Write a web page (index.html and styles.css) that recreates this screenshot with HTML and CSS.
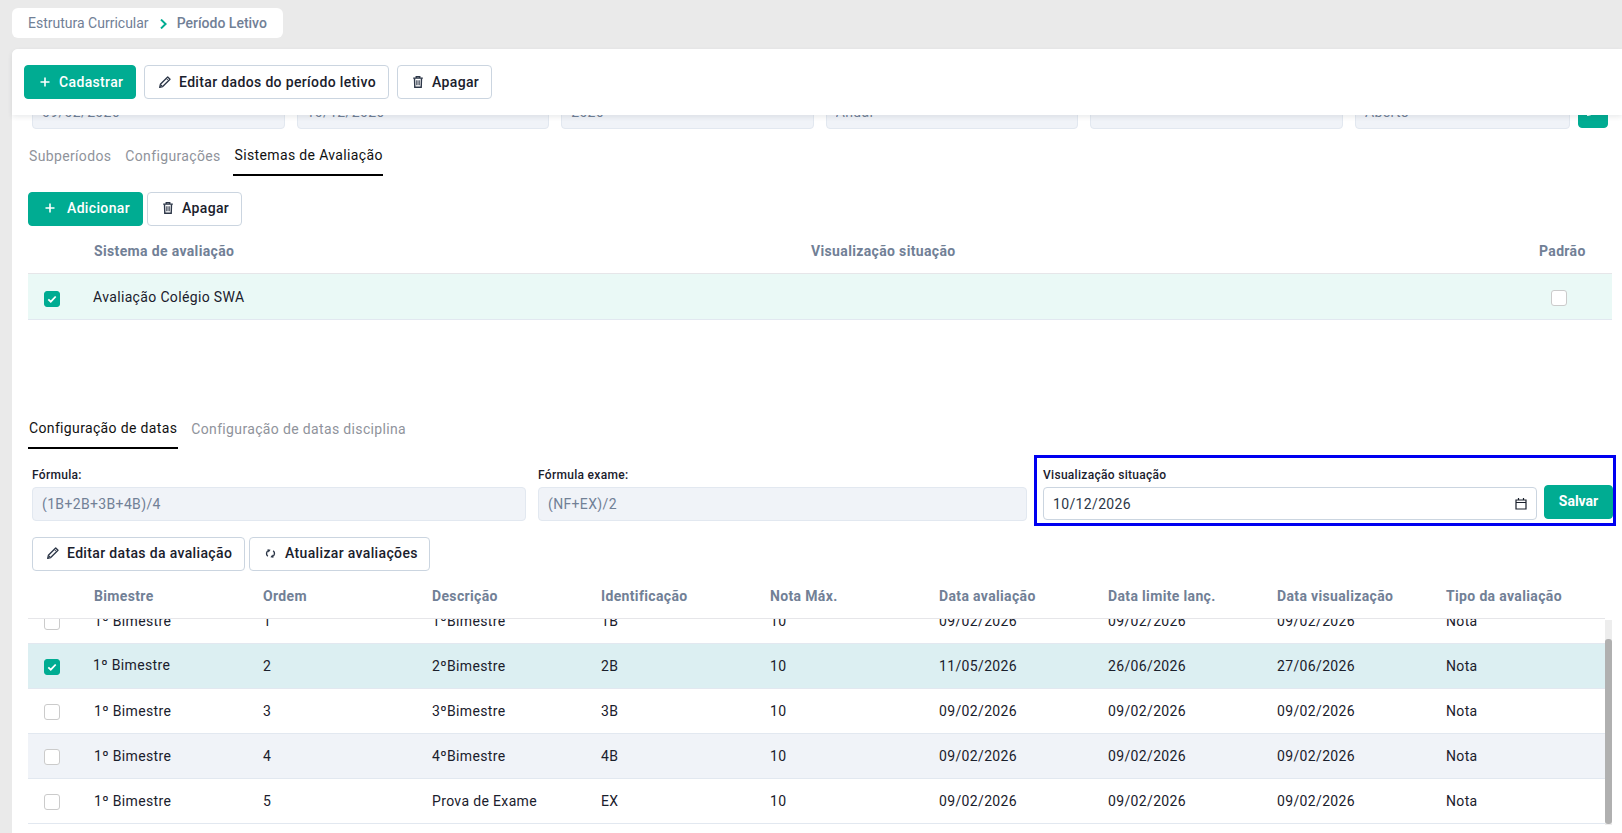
FILE: index.html
```html
<!DOCTYPE html>
<html lang="pt-BR">
<head>
<meta charset="utf-8">
<title>Período Letivo</title>
<link rel="stylesheet" href="styles.css">
</head>
<body>
<svg class="defs" width="0" height="0" aria-hidden="true">
  <symbol id="i-plus" viewBox="0 0 10 10"><path d="M5 .5v9M.5 5h9" fill="none" stroke="currentColor" stroke-width="1.6"/></symbol>
  <symbol id="i-pencil" viewBox="0 0 12 12"><path d="M8.700 1l2.300 2.300-7.300 7.300-3 .7.700-3z" fill="none" stroke="currentColor" stroke-width="1.350" stroke-linejoin="round"/><path d="M2.400 8.400l1.200 1.200L1 11z" fill="currentColor"/><path d="M7.500 2.700l1.800 1.800" stroke="currentColor" stroke-width="1"/></symbol>
  <symbol id="i-trash" viewBox="0 0 10 12"><path d="M.2 2.100h9.600M3.200 2V.7h3.600V2" fill="none" stroke="currentColor" stroke-width="1.300"/><path d="M1.500 2.200l.3 9.100h6.400l.3-9.100" fill="none" stroke="currentColor" stroke-width="1.400"/><path d="M3.900 4.200v5M6.100 4.200v5" fill="none" stroke="currentColor" stroke-width="1.200"/></symbol>
  <symbol id="i-sync" viewBox="0 0 11 11"><path d="M3.800 2.300A3.500 3.500 0 0 0 2.800 8.300M7.200 8.700A3.500 3.500 0 0 0 8.200 2.700" fill="none" stroke="currentColor" stroke-width="1.400"/><path d="M2.400 1.200l3.200.6-2 2.600zM8.600 9.800l-3.200-.6 2-2.600z" fill="currentColor"/></symbol>
  <symbol id="i-check" viewBox="0 0 16 16"><path d="M4.300 8.300l2.500 2.400 4.900-5.200" fill="none" stroke="#fff" stroke-width="1.800"/></symbol>
</svg>

<div class="page">
  <nav class="crumbs">
    <span>Estrutura Curricular</span>
    <svg class="chev" width="7" height="10" viewBox="0 0 7 10"><path d="M1 .6L5.600 5 1 9.400" fill="none" stroke="#00ac92" stroke-width="2"/></svg>
    <strong>Período Letivo</strong>
  </nav>

  <main class="card">
    <header class="toolbar">
      <button class="btn primary add-a"><svg class="ic-plus"><use href="#i-plus"/></svg>Cadastrar</button>
      <button class="btn edit-a"><svg class="ic-pencil"><use href="#i-pencil"/></svg>Editar dados do período letivo</button>
      <button class="btn del-a"><svg class="ic-trash"><use href="#i-trash"/></svg>Apagar</button>
    </header>

    <section class="content">
      <div class="period">
        <input class="field" disabled value="09/02/2026">
        <input class="field" disabled value="10/12/2026">
        <input class="field" disabled value="2026">
        <input class="field" disabled value="Anual">
        <input class="field" disabled value="">
        <input class="field" disabled value="Aberto">
        <button class="btn primary square"><svg class="ic-pencil"><use href="#i-pencil"/></svg></button>
      </div>

      <div class="tabs tabs-top">
        <a class="tab">Subperíodos</a>
        <a class="tab">Configurações</a>
        <a class="tab active">Sistemas de Avaliação</a>
      </div>

      <div class="actions actions-sys">
        <button class="btn primary add-b"><svg class="ic-plus"><use href="#i-plus"/></svg>Adicionar</button>
        <button class="btn del-b"><svg class="ic-trash"><use href="#i-trash"/></svg>Apagar</button>
      </div>

      <div class="sys-table">
        <div class="thead sys-cols">
          <span></span><span>Sistema de avaliação</span><span>Visualização situação</span><span>Padrão</span>
        </div>
        <div class="row sys-cols mint">
          <span class="box on"><svg><use href="#i-check"/></svg></span>
          <span class="nudge">Avaliação Colégio SWA</span>
          <span></span>
          <span class="box pad-box"></span>
        </div>
      </div>

      <div class="tabs tabs-dates">
        <a class="tab active">Configuração de datas</a>
        <a class="tab">Configuração de datas disciplina</a>
      </div>

      <div class="formula">
        <label class="group">Fórmula:<input class="field" disabled value="(1B+2B+3B+4B)/4"></label>
        <label class="group">Fórmula exame:<input class="field" disabled value="(NF+EX)/2"></label>
        <div class="group marked">
          <span>Visualização situação</span>
          <div class="date-line">
            <div class="date">
              <span>10/12/2026</span>
              <svg width="12" height="13" viewBox="0 0 12 13"><path d="M1 3h10v9H1zM1 5.500h10M3.500 1v2.500M8.500 1v2.500" fill="none" stroke="#1a202c" stroke-width="1.200"/></svg>
            </div>
            <button class="btn primary save">Salvar</button>
          </div>
        </div>
      </div>

      <div class="actions actions-dates">
        <button class="btn edit-b"><svg class="ic-pencil"><use href="#i-pencil"/></svg>Editar datas da avaliação</button>
        <button class="btn sync"><svg class="ic-sync"><use href="#i-sync"/></svg>Atualizar avaliações</button>
      </div>

      <div class="dates-table">
        <div class="thead date-cols">
          <span></span><span>Bimestre</span><span>Ordem</span><span>Descrição</span><span>Identificação</span><span>Nota Máx.</span><span>Data avaliação</span><span>Data limite lanç.</span><span>Data visualização</span><span>Tipo da avaliação</span>
        </div>
        <div class="viewport">
          <div class="rows">
            <div class="row date-cols"><span class="box"></span><span>1º Bimestre</span><span>1</span><span>1ºBimestre</span><span>1B</span><span>10</span><span>09/02/2026</span><span>09/02/2026</span><span>09/02/2026</span><span>Nota</span></div>
            <div class="row date-cols aqua"><span class="box on"><svg><use href="#i-check"/></svg></span><span class="nudge">1º Bimestre</span><span>2</span><span>2ºBimestre</span><span>2B</span><span>10</span><span>11/05/2026</span><span>26/06/2026</span><span>27/06/2026</span><span>Nota</span></div>
            <div class="row date-cols"><span class="box"></span><span>1º Bimestre</span><span>3</span><span>3ºBimestre</span><span>3B</span><span>10</span><span>09/02/2026</span><span>09/02/2026</span><span>09/02/2026</span><span>Nota</span></div>
            <div class="row date-cols stripe"><span class="box"></span><span>1º Bimestre</span><span>4</span><span>4ºBimestre</span><span>4B</span><span>10</span><span>09/02/2026</span><span>09/02/2026</span><span>09/02/2026</span><span>Nota</span></div>
            <div class="row date-cols"><span class="box"></span><span>1º Bimestre</span><span>5</span><span>Prova de Exame</span><span>EX</span><span>10</span><span>09/02/2026</span><span>09/02/2026</span><span>09/02/2026</span><span>Nota</span></div>
          </div>
          <div class="track"><div class="thumb"></div></div>
        </div>
      </div>
    </section>
  </main>
</div>
</body>
</html>
```
FILE: styles.css
```css
* { box-sizing: border-box; }
html, body { margin: 0; height: 100%; overflow: hidden; }
body {
  background: #eaeaea;
  color: #1a202c;
  font: 14px/20px Roboto, "Liberation Sans", sans-serif;
  letter-spacing: .35px;
}
.defs { position: absolute; }

.page { height: 833px; padding: 8px 0 0 12px; display: flex; flex-direction: column; }

.crumbs {
  width: 271px; height: 30px; margin-bottom: 11px; padding-left: 16px;
  display: flex; align-items: center;
  background: #fff; border-radius: 6px; color: #718096;
  letter-spacing: 0;
}
.crumbs strong { font-weight: 500; }
.chev { margin: 1px 10px 0 11px; }

.card {
  flex: 1; min-height: 0; display: flex; flex-direction: column;
  background: #fff; border-radius: 6px 0 0 0;
}
.toolbar {
  position: relative; z-index: 2; flex: none;
  height: 66px; padding: 16px 0 0 12px;
  display: flex; gap: 8px; align-items: flex-start;
  background: #fff; border-radius: 6px 0 0 0;
  box-shadow: 0 2px 5px rgba(45, 55, 72, .1);
}

.btn {
  height: 34px; padding: 0; display: inline-flex; align-items: center; justify-content: flex-start;
  background: #fff; color: #1a202c; border: 1px solid #cbd5e0; border-radius: 4px;
  font: 500 14px/20px Roboto, "Liberation Sans", sans-serif; letter-spacing: .35px;
}
.btn.primary { background: #00ac92; border-color: #00ac92; color: #fff; }
.btn svg { flex: none; }
.actions .btn { padding-bottom: 2px; }
.ic-plus { width: 10px; height: 10px; }
.ic-pencil { width: 12px; height: 12px; color: #2d3748; }
.ic-trash { width: 10px; height: 12px; color: #2d3748; }
.ic-sync { width: 11px; height: 11px; color: #2d3748; }

.add-a { width: 112px; padding-left: 15px; }
.add-a svg { margin-right: 9px; }
.edit-a { width: 245px; padding-left: 14px; }
.edit-a svg { margin-right: 8px; }
.del-a { width: 95px; padding-left: 15px; }
.del-a svg { margin-right: 9px; }
.add-b { width: 115px; padding-left: 16px; }
.add-b svg { margin-right: 12px; }
.del-b { width: 95px; padding-left: 15px; }
.del-b svg { margin-right: 9px; }
.edit-b { width: 212.500px; padding-left: 14px; }
.edit-b svg { margin-right: 8px; }
.sync { width: 181px; padding-left: 15px; }
.sync svg { margin-right: 9px; }

.content { flex: 1; min-height: 0; overflow: hidden; padding: 0 10px 0 16px; }

.field {
  width: 100%; height: 34px; padding: 0 9px;
  background: #f0f3f8; color: #718096; border: 1px solid #e2e8f0; border-radius: 4px;
  font: 14px Roboto, "Liberation Sans", sans-serif; letter-spacing: .35px; opacity: 1;
}

.period {
  margin: -20px 0 0 4px;
  display: grid; grid-template-columns: repeat(5, 1fr) 215px 30px; column-gap: 12px; width: 1580px;
}
.square { width: 30px; height: 33px; margin-left: -4px; justify-content: center; align-items: flex-end; overflow: hidden; }
.square .ic-pencil { color: #fff; margin-bottom: 11px; }

.tabs { display: flex; gap: 12px; height: 41px; }
.tabs-top { margin-top: 6px; }
.tabs-dates { margin-top: 88px; }
.tab { padding: 11px 1px 0; height: 41px; color: #8f939b; }
.tab.active { color: #111; padding-top: 10px; border-bottom: 2px solid #000; }
.tabs-top .tab.active { margin-left: -1px; padding-left: 2px; padding-right: 0; }

.actions { display: flex; gap: 4px; }
.actions-sys { margin-top: 16px; }
.actions-dates { margin-top: 14px; gap: 4.500px; margin-left: 4px; }

.thead {
  height: 48px; padding-top: 3px; align-items: center;
  color: #718096; font-weight: 700;
  border-bottom: 1px solid #e6e6e9;
}
.row { height: 46px; align-items: center; border-bottom: 1px solid #e2e8f0; }
.sys-cols { display: grid; grid-template-columns: 66px 717px 728px 1fr; }
.sys-table { width: 1584px; }
.mint { background: #eaf9f6; }

.box {
  width: 16px; height: 16px; margin: 2px 0 0 16px;
  display: block; background: #fff; border: 1px solid #cbcbcb; border-radius: 3px;
}
.box.on { background: #00ac92; border-color: #00ac92; position: relative; }
.box.on svg { position: absolute; inset: -1px; width: 16px; height: 16px; }
.mint .box.on { margin-top: 4px; }
.pad-box { margin: 2px 0 0 12px; }
.nudge { margin: -3px 0 0 -1px; }
.mint .nudge { margin-top: 0; }

.formula { display: grid; grid-template-columns: 494px 489px 574px; column-gap: 12px; margin: 9px 0 0 4px; align-items: end; }
.group { display: block; font-size: 12px; line-height: 16px; font-weight: 500; letter-spacing: .3px; }
.group .field { display: block; margin: 4px 0 2px; }
.marked {
  margin-left: -2px; padding: 9px 0 3px 6px;
  outline: 3px solid #0000f0;
}
.date-line { display: flex; gap: 7px; align-items: flex-start; margin-top: 2px; }
.date {
  flex: 1; height: 33px; margin-top: 2px; padding: 0 9px 0 10px;
  display: flex; align-items: center; justify-content: space-between;
  border: 1px solid #cbd5e0; border-radius: 4px;
  font-size: 14px; font-weight: 400; letter-spacing: .35px; color: #2d3748;
}
.date span { margin-left: -1px; }
.save { flex: none; width: 69px; height: 34px; justify-content: center; font-weight: 700; letter-spacing: 0; padding-bottom: 2px; }

.date-cols { display: grid; grid-template-columns: 66px repeat(8, 169px) 1fr; }
.dates-table { width: 1584px; }
.dates-table .thead { width: 1577px; }
.viewport { display: flex; height: 206px; overflow: hidden; }
.rows { flex: none; width: 1577px; margin-top: -20px; }
.rows .row { height: 45px; }
.aqua { background: #dceff2; }
.stripe { background: #f0f3f8; }
.track { flex: none; width: 7px; margin-top: 1px; background: #ededed; }
.thumb { height: 185px; margin-top: 19px; background: #b0b0b0; border-radius: 3px; }
```
